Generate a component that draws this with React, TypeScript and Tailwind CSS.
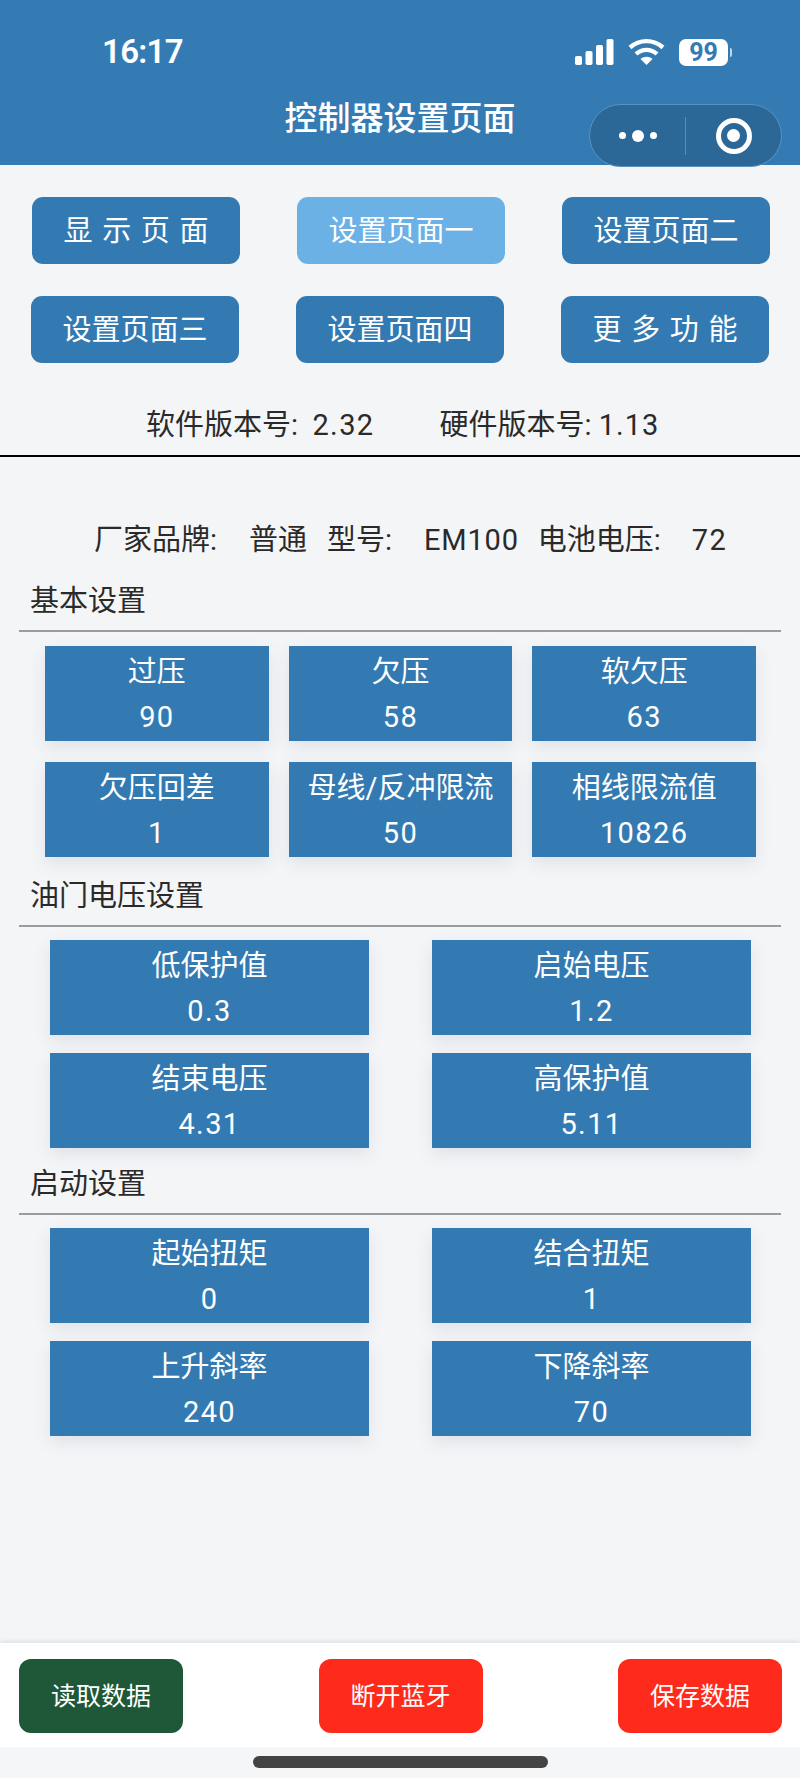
const navRows = [
  {
    cls: "ml-[32px]",
    items: [
      { label: "显 示 页 面", active: false },
      { label: "设置页面一", active: true },
      { label: "设置页面二", active: false },
    ],
  },
  {
    cls: "ml-[31px] mt-[32px]",
    items: [
      { label: "设置页面三", active: false },
      { label: "设置页面四", active: false },
      { label: "更 多 功 能", active: false },
    ],
  },
];

const basic = [
  ["过压", "90"],
  ["欠压", "58"],
  ["软欠压", "63"],
  ["欠压回差", "1"],
  ["母线/反冲限流", "50"],
  ["相线限流值", "10826"],
];

const throttle = [
  ["低保护值", "0.3"],
  ["启始电压", "1.2"],
  ["结束电压", "4.31"],
  ["高保护值", "5.11"],
];

const startup = [
  ["起始扭矩", "0"],
  ["结合扭矩", "1"],
  ["上升斜率", "240"],
  ["下降斜率", "70"],
];

function Card({ title, value }: { title: string; value: string }) {
  return (
    <div className="flex h-[95px] flex-col items-center bg-[#337ab3] text-white shadow-[0_6px_16px_rgba(40,60,90,0.1)]">
      <div className="flex h-[52px] items-center text-[29px] leading-none">{title}</div>
      <div className="flex h-[38px] items-center text-[29px] leading-none tracking-[1.4px]">{value}</div>
    </div>
  );
}

function SectionTitle({ text }: { text: string }) {
  return (
    <>
      <div className="flex h-[40px] items-center pl-[30px] text-[29px] leading-none text-[#2a2a2a]">{text}</div>
      <div className="mx-[19px] mt-[9px] h-[2px] bg-[#9a9c9f]" />
    </>
  );
}

function PairGrid({ items }: { items: string[][] }) {
  return (
    <div className="mt-[13px] ml-[50px] grid w-[701px] grid-cols-[319px_319px] gap-x-[63px] gap-y-[18px]">
      {items.map(([t, v]) => (
        <Card key={t} title={t} value={v} />
      ))}
    </div>
  );
}

export default function App() {
  return (
    <div
      className="flex min-h-[1778px] w-[800px] flex-col overflow-hidden bg-[#f4f5f7]"
      style={{ fontFamily: '"Roboto", "Noto Sans CJK SC", sans-serif' }}
    >
      <header className="relative h-[165px] shrink-0 bg-[#347bb3] pt-[30px] text-white">
        <div className="flex h-[44px] items-center justify-between pl-[102px] pr-[68px]">
          <span className="text-[33px] font-semibold tracking-[-0.7px]">16:17</span>
          <div className="flex items-center gap-[14px]">
            <svg width="39" height="26" viewBox="0 0 39 26" fill="white">
              <rect x="0" y="17" width="7" height="9" rx="1.8" />
              <rect x="10.5" y="12" width="7" height="14" rx="1.8" />
              <rect x="21" y="6" width="7" height="20" rx="1.8" />
              <rect x="31.5" y="0" width="7" height="26" rx="1.8" />
            </svg>
            <svg width="37" height="28" viewBox="0 0 37 28" fill="none" stroke="white" strokeWidth="4.4">
              <path d="M2 9.5C11.5 1 25.5 1 35 9.5" />
              <path d="M8 16C14 10.5 23 10.5 29 16" />
              <path d="M18.5 27L12.5 21C16 18 21 18 24.500 21Z" fill="white" stroke="none" />
            </svg>
            <div className="flex items-center gap-[2px]">
              <div className="flex h-[27px] w-[49px] items-center justify-center rounded-[7px] bg-white text-[25px] font-bold leading-none text-[#347bb3]">
                99
              </div>
              <div className="h-[9px] w-[2px] rounded-r-full bg-white/70" />
            </div>
          </div>
        </div>
        <div className="mt-[22px] flex h-[44px] items-center justify-center text-[33px] font-medium leading-none">
          控制器设置页面
        </div>
        <div className="absolute left-[589px] top-[104px] flex h-[63px] w-[193px] items-center rounded-full border border-[#5a93c0] bg-[#2b6898]">
          <div className="flex w-[95px] items-center justify-center gap-[6px]">
            <span className="h-[7px] w-[7px] rounded-full bg-white" />
            <span className="h-[12px] w-[12px] rounded-full bg-white" />
            <span className="h-[7px] w-[7px] rounded-full bg-white" />
          </div>
          <div className="h-[38px] w-px bg-[#5a8fb8]" />
          <div className="flex flex-1 items-center justify-center">
            <div className="flex h-[36px] w-[36px] items-center justify-center rounded-full border-[5px] border-white">
              <span className="h-[13px] w-[13px] rounded-full bg-white" />
            </div>
          </div>
        </div>
      </header>

      <div className="pt-[32px]">
        {navRows.map((row) => (
          <div key={row.items[0].label} className={`flex gap-[57px] ${row.cls}`}>
            {row.items.map((b) =>
              b.active ? (
                <div
                  key={b.label}
                  className="flex h-[67px] w-[208px] items-center justify-center rounded-[11px] bg-[#6cb1e6] pt-[2px] text-[29px] leading-none text-white"
                >
                  {b.label}
                </div>
              ) : (
                <div
                  key={b.label}
                  className="flex h-[67px] w-[208px] items-center justify-center whitespace-pre rounded-[11px] bg-[#337ab3] pt-[2px] text-[29px] leading-none text-white [word-spacing:2.5px]"
                >
                  {b.label}
                </div>
              ),
            )}
          </div>
        ))}
      </div>

      <div className="mt-[42px] flex h-[40px] items-center gap-[65px] pl-[146px] text-[29px] leading-none text-[#2a2a2a]">
        <span className="whitespace-pre">
          软件版本号:  <span className="tracking-[1.4px]">2.32</span>
        </span>
        <span className="whitespace-pre">
          硬件版本号: <span className="tracking-[1px]">1.13</span>
        </span>
      </div>
      <div className="mt-[10px] h-[2px] bg-black" />

      <div className="mt-[63px] flex h-[40px] items-center pl-[94px] text-[29px] leading-none text-[#2a2a2a]">
        <span>厂家品牌:</span>
        <span className="ml-[32px]">普通</span>
        <span className="ml-[20px]">型号:</span>
        <span className="ml-[32px] tracking-[0.8px]">EM100</span>
        <span className="ml-[19px]">电池电压:</span>
        <span className="ml-[31px] tracking-[1.4px]">72</span>
      </div>

      <div className="mt-[21px]">
        <SectionTitle text="基本设置" />
        <div className="mt-[14px] ml-[45px] grid w-[711px] grid-cols-3 gap-x-[20px] gap-y-[21px]">
          {basic.map(([t, v]) => (
            <Card key={t} title={t} value={v} />
          ))}
        </div>
      </div>

      <div className="mt-[19px]">
        <SectionTitle text="油门电压设置" />
        <PairGrid items={throttle} />
      </div>

      <div className="mt-[16px]">
        <SectionTitle text="启动设置" />
        <PairGrid items={startup} />
      </div>

      <div className="flex-1" />

      <footer className="flex h-[104px] shrink-0 items-start justify-between bg-white pl-[19px] pr-[18px] pt-[16px] shadow-[0_-2px_4px_rgba(0,0,0,0.08)]">
        <div className="flex h-[74px] w-[164px] items-center justify-center rounded-[12px] bg-[#1f5838] text-[25px] leading-none text-white">
          读取数据
        </div>
        <div className="flex h-[74px] w-[164px] items-center justify-center rounded-[12px] bg-[#fe2b1c] text-[25px] leading-none text-white">
          断开蓝牙
        </div>
        <div className="flex h-[74px] w-[164px] items-center justify-center rounded-[12px] bg-[#fe2b1c] text-[25px] leading-none text-white">
          保存数据
        </div>
      </footer>
      <div className="flex h-[31px] shrink-0 justify-center bg-[#f5f6f7] pt-[9px]">
        <div className="h-[12px] w-[295px] rounded-full bg-[#444444]" />
      </div>
    </div>
  );
}
